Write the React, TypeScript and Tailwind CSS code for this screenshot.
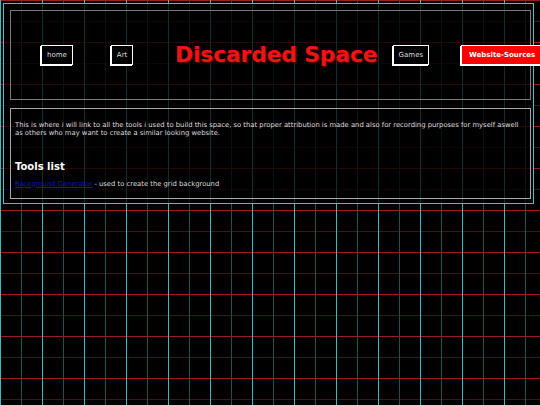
import React from 'react';

const navBtn =
  'shrink-0 whitespace-nowrap border border-white bg-black px-[5px] py-[4px] text-[7px] leading-[10px] text-[#dddddd] shadow-[-1px_1px_0_#ffffff]';

export default function App() {
  return (
    <div className="min-h-[405px] w-[540px] overflow-hidden bg-black bg-[linear-gradient(90deg,#3fb9b9_0_1px,transparent_1px_21px,#1b5252_21px_22px,transparent_22px),linear-gradient(180deg,#a01c1c_0_1px,transparent_1px_21px,#4a1212_21px_22px,transparent_22px)] bg-[size:42px_42px] bg-[position:0_0] pt-[3px] pl-[3px] font-['DejaVu_Sans',Verdana,sans-serif]">
      <div className="w-[531px] border border-[#3fc6c6] bg-black/75 pt-[6px] pr-[2px] pb-[4px] pl-[6px]">
        <header className="flex h-[90px] w-[521px] items-center border border-[#7a7a7a] pl-[30px]">
          <a className={navBtn}>home</a>
          <a className={`${navBtn} ml-[38px]`}>Art</a>
          <h1 className="ml-[42px] shrink-0 whitespace-nowrap text-[21.6px] font-bold leading-none text-[#ec1414] [text-shadow:1px_1px_0_#5a0000,-0.5px_-0.5px_0_#8a0000]">
            Discarded Space
          </h1>
          <a className={`${navBtn} ml-[15px]`}>Games</a>
          <a className="ml-[32px] shrink-0 whitespace-nowrap border border-white bg-[#ff0000] px-[7px] py-[4px] text-[7px] font-bold leading-[10px] text-white shadow-[-1px_1px_0_#ffffff]">
            Website-Sources
          </a>
        </header>

        <section className="mt-[8px] w-[521px] border border-[#a8a8a8] pt-[12px] pr-[10px] pb-[10px] pl-[4px] text-[6.8px] leading-[8.3px] text-[#dddddd]">
          <p>
            This is where i will link to all the tools i used to build this space, so that proper attribution is made and also for recording purposes for myself aswell as others who may want to create a similar looking website.
          </p>
          <h2 className="mt-[23px] text-[10px] font-bold leading-[12px] text-white">Tools list</h2>
          <p className="mt-[7px]">
            <a className="text-[#1414c8] underline">Background Generator</a> - used to create the grid background
          </p>
        </section>
      </div>
    </div>
  );
}
